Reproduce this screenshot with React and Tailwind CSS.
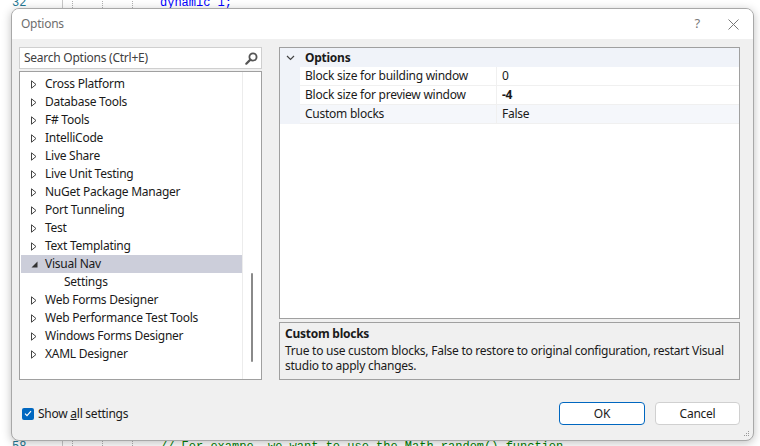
import React from 'react'

const treeItems = [
  { label: 'Cross Platform' },
  { label: 'Database Tools' },
  { label: 'F# Tools' },
  { label: 'IntelliCode' },
  { label: 'Live Share' },
  { label: 'Live Unit Testing' },
  { label: 'NuGet Package Manager' },
  { label: 'Port Tunneling' },
  { label: 'Test' },
  { label: 'Text Templating' },
  { label: 'Visual Nav', expanded: true, selected: true },
  { label: 'Settings', child: true },
  { label: 'Web Forms Designer' },
  { label: 'Web Performance Test Tools' },
  { label: 'Windows Forms Designer' },
  { label: 'XAML Designer' },
]

const properties = [
  { name: 'Block size for building window', value: '0' },
  { name: 'Block size for preview window', value: '-4', bold: true },
  { name: 'Custom blocks', value: 'False', active: true },
]

const CollapsedArrow = () => (
  <svg width="6" height="9" viewBox="0 0 6 9" className="shrink-0">
    <path d="M0.5 0.8 L5 4.5 L0.5 8.2 Z" fill="none" stroke="#444" strokeWidth="1" />
  </svg>
)

const ExpandedArrow = () => (
  <svg width="7" height="7" viewBox="0 0 7 7" className="shrink-0">
    <path d="M6.5 0.5 L6.5 6.5 L0.5 6.5 Z" fill="#333" />
  </svg>
)

const SearchIcon = () => (
  <svg width="13" height="13" viewBox="0 0 13 13">
    <circle cx="8" cy="5" r="3.6" fill="none" stroke="#555" strokeWidth="1.8" />
    <path d="M5.4 7.6 L1.3 11.7" stroke="#555" strokeWidth="2.2" strokeLinecap="round" />
  </svg>
)

const CodeLine = ({ num, children, color }) => (
  <div className="flex items-center h-[17px] font-['Liberation_Mono','DejaVu_Sans_Mono',monospace] text-[12px] leading-[17px] tracking-normal">
    <span className="w-[62px] pl-[12px] text-[#237893]">{num}</span>
    <span className="w-px h-full bg-[#c8c8c8]" />
    <span className="w-[9px]" />
    <span className="w-0 h-full border-l border-dotted border-[#b0b0b0]" />
    <span className="w-[29px]" />
    <span className="w-0 h-full border-l border-dotted border-[#b0b0b0]" />
    <span className="w-[29px]" />
    <span className="w-0 h-full border-l border-dotted border-[#b0b0b0]" />
    <span className="w-[27px]" />
    <span className={color}>{children}</span>
  </div>
)

export default function App() {
  return (
    <div className="relative w-[760px] h-[446px] overflow-hidden bg-white font-['Noto_Sans',sans-serif] text-[12px] tracking-[-0.25px] text-[#1a1a1a]">
      <div className="flex flex-col justify-between h-full">
        <div className="-mt-[5px]">
          <CodeLine num="32" color="text-[#0000ff]">dynamic 1;</CodeLine>
        </div>
        <div className="-mb-[10px]">
          <CodeLine num="58" color="text-[#008000]">// For exampe, we want to use the Math.random() function</CodeLine>
        </div>
      </div>

      {/* dialog window */}
      <div className="absolute left-[11px] top-[8px] w-[743px] h-[433px] flex flex-col rounded-[8px] border border-[#a8a8a8] bg-[#f0f0f0] shadow-[0_2px_10px_rgba(0,0,0,0.25)] overflow-hidden">
        <div className="h-[30px] shrink-0 bg-white flex items-center pl-[9px] pr-[14px]">
          <span className="text-[#6e6e6e] text-[12px]">Options</span>
          <div className="ml-auto flex items-center gap-[28px] text-[#7a7a7a]">
            <span className="text-[13px]">?</span>
            <svg width="11" height="11" viewBox="0 0 11 11">
              <path d="M0.5 0.5 L10.5 10.5 M10.5 0.5 L0.5 10.5" stroke="#777" strokeWidth="1" />
            </svg>
          </div>
        </div>

        <div className="flex-1 flex flex-col pl-[7px] pr-[13px] pt-[8px]">
          <div className="flex gap-[17px] h-[333px]">
            {/* left column */}
            <div className="w-[243px] flex flex-col gap-[2px]">
              <div className="h-[22px] bg-white border border-[#cfcfcf] flex items-center pl-[4px] pr-[3px]">
                <span className="text-[#404040]">Search Options (Ctrl+E)</span>
                <span className="ml-auto flex"><SearchIcon /></span>
              </div>
              <div className="flex-1 bg-white border border-[#a0a0a0] flex">
                <div className="w-[222px] pt-[3px] pl-px">
                  {treeItems.map((item) => (
                    <div
                      key={item.label}
                      className={`h-[18px] flex items-center ${item.selected ? 'bg-[#ccceda]' : ''}`}
                    >
                      <span className="w-[24px] pl-[10px] flex items-center">
                        {item.child ? null : item.expanded ? <ExpandedArrow /> : <CollapsedArrow />}
                      </span>
                      <span className={item.child ? 'pl-[19px]' : ''}>{item.label}</span>
                    </div>
                  ))}
                </div>
                <div className="flex-1 border-l border-[#ececec] pt-[201px] flex justify-center">
                  <div className="w-[2px] h-[89px] bg-[#8a8a8a] rounded-full" />
                </div>
              </div>
            </div>

            {/* right column */}
            <div className="flex-1 flex flex-col gap-[3px]">
              <div className="flex-1 bg-white border border-[#a0a0a0] flex flex-col">
                <div className="h-[19px] bg-[#f0f3f9] flex items-center">
                  <span className="w-[20px] flex justify-center">
                    <svg width="9" height="6" viewBox="0 0 9 6">
                      <path d="M1 1 L4.5 4.5 L8 1" fill="none" stroke="#444" strokeWidth="1.2" />
                    </svg>
                  </span>
                  <span className="pl-[5px] font-bold">Options</span>
                </div>
                {properties.map((p) => (
                  <div key={p.name} className="h-[19px] flex">
                    <span className="w-[20px] bg-[#f0f3f9]" />
                    <div className={`flex-1 flex items-center border-b border-[#f0f0f0] ${p.active ? 'bg-[#f5f7fb]' : ''}`}>
                      <span className="w-[197px] pl-[5px] h-full flex items-center border-r border-[#f0f0f0]">{p.name}</span>
                      <span className={`pl-[5px] ${p.bold ? 'font-bold' : ''}`}>{p.value}</span>
                    </div>
                  </div>
                ))}
              </div>
              <div className="h-[58px] border border-[#a0a0a0] bg-[#f0f0f0] px-[5px] pt-[2px] leading-[15px]">
                <div className="font-bold h-[17px] flex items-center">Custom blocks</div>
                <div className="mt-[1px]">
                  True to use custom blocks, False to restore to original configuration, restart Visual studio to apply changes.
                </div>
              </div>
            </div>
          </div>

          <div className="flex items-center mt-[22px]">
            <label className="flex items-center gap-[4px] pl-[3px]">
              <span className="w-[12px] h-[12px] rounded-[2px] bg-[#0067c0] flex items-center justify-center">
                <svg width="8" height="7" viewBox="0 0 8 7">
                  <path d="M1 3.6 L3 5.6 L7 1.2" fill="none" stroke="white" strokeWidth="1.2" />
                </svg>
              </span>
              <span>
                Show <span className="underline">a</span>ll settings
              </span>
            </label>
            <div className="ml-auto flex gap-[10px]">
              <button className="w-[86px] h-[23px] rounded-[4px] bg-white border border-[#0067c0] text-[12px]">OK</button>
              <button className="w-[85px] h-[23px] rounded-[4px] bg-white border border-[#d0d0d0] text-[12px]">Cancel</button>
            </div>
          </div>
        </div>

        <svg className="absolute right-[3px] bottom-[3px]" width="7" height="7" viewBox="0 0 7 7">
          <rect x="5" y="1" width="1" height="1" fill="#999" />
          <rect x="3" y="3" width="1" height="1" fill="#999" />
          <rect x="5" y="3" width="1" height="1" fill="#999" />
          <rect x="1" y="5" width="1" height="1" fill="#999" />
          <rect x="3" y="5" width="1" height="1" fill="#999" />
          <rect x="5" y="5" width="1" height="1" fill="#999" />
        </svg>
      </div>
    </div>
  )
}
